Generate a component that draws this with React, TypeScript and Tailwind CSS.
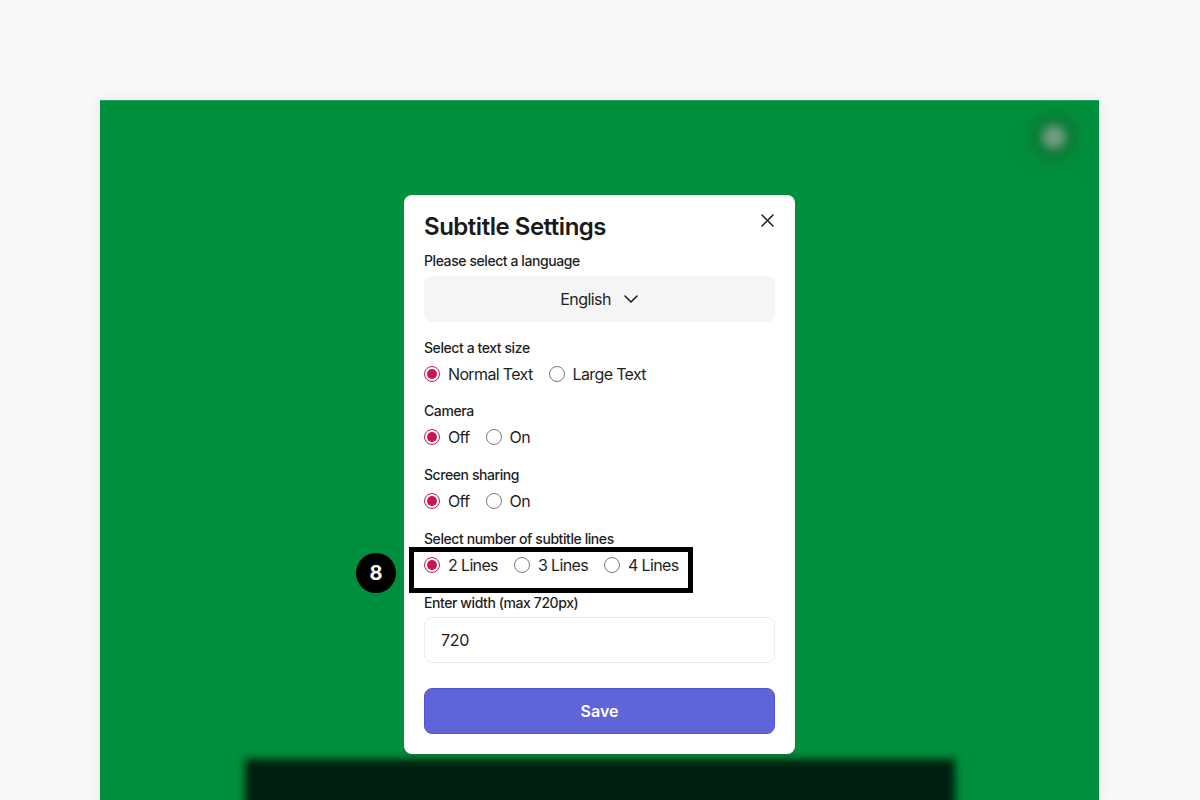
import React, { useState } from 'react'

const font = { fontFamily: 'Inter, "Noto Sans", sans-serif' }

type RadioProps = { label: string; checked: boolean; onClick: () => void }

const Radio: React.FC<RadioProps> = ({ label, checked, onClick }) => {
  return (
    <button type="button" onClick={onClick} className="flex items-center gap-2 h-6">
      {checked ? (
        <span className="w-4 h-4 rounded-full border-[1.5px] border-[#c8194f] flex items-center justify-center">
          <span className="w-[10px] h-[10px] rounded-full bg-[#c8194f]" />
        </span>
      ) : (
        <span className="w-4 h-4 rounded-full border border-[#7a7a7a] bg-white" />
      )}
      <span className="text-base tracking-[-0.04em] text-[#1f1f1f]">{label}</span>
    </button>
  )
}

const RadioGroup: React.FC<{ label: string; options: string[]; className?: string }> = ({ label, options, className }) => {
  const [value, setValue] = useState(options[0])
  return (
    <div className={`flex flex-col gap-1 ${className ?? ''}`}>
      <div className="text-sm font-medium leading-5 tracking-[-0.03em] text-[#1f1f1f]">{label}</div>
      <div className="flex items-center gap-4">
        {options.map((o) => (
          <Radio key={o} label={o} checked={value === o} onClick={() => setValue(o)} />
        ))}
      </div>
    </div>
  )
}

export default function App() {
  const [width, setWidth] = useState('720')

  return (
    <div className="w-[1200px] h-[800px] bg-[#f8f8f8] overflow-hidden pt-[100px] pl-[100px]" style={font}>
      <div className="relative w-[999px] h-[700px] bg-[#008f3c] border-t border-[#2aa35c] shadow-[0_0_12px_rgba(0,0,0,0.08)] overflow-hidden">
        {/* blurred control in the corner */}
        <div className="absolute left-[930px] top-[12px] w-12 h-12 rounded-full bg-[#0a7a36] blur-[6px]" />
        <div className="absolute left-[942px] top-[24px] w-6 h-6 rounded-full bg-[#6f9c80] blur-[5px]" />
        {/* blurred subtitle bar */}
        <div className="absolute left-[145px] top-[658px] w-[710px] h-[80px] bg-[#001f0e] blur-[4px]" />

        {/* dialog */}
        <div className="absolute left-[304px] top-[94px] w-[391px] bg-white rounded-lg px-5 pt-4 pb-5">
          <div className="relative flex items-center h-8">
            <h2 className="text-2xl font-semibold tracking-[-0.02em] text-[#1a1a1a]">Subtitle Settings</h2>
            <button type="button" className="absolute right-0 top-[1px] w-4 h-4 flex items-center justify-center text-[#1a1a1a]">
              <svg width="13" height="13" viewBox="0 0 13 13" fill="none" stroke="currentColor" strokeWidth="1.5" strokeLinecap="round">
                <path d="M1 1 L12 12 M12 1 L1 12" />
              </svg>
            </button>
          </div>

          <div className="flex flex-col gap-[5px] mt-[8px]">
            <div className="text-sm font-medium leading-5 tracking-[-0.03em] text-[#1f1f1f]">Please select a language</div>
            <button type="button" className="h-[46px] w-full rounded-lg bg-[#f5f5f5] flex items-center justify-center gap-3 text-base tracking-[-0.035em] text-[#1f1f1f]">
              <span>English</span>
              <svg width="16" height="16" viewBox="0 0 16 16" fill="none" stroke="currentColor" strokeWidth="1.6" strokeLinecap="round" strokeLinejoin="round">
                <path d="M2 5 L8 11 L14 5" />
              </svg>
            </button>
          </div>

          <RadioGroup className="mt-4" label="Select a text size" options={['Normal Text', 'Large Text']} />
          <RadioGroup className="mt-[15px]" label="Camera" options={['Off', 'On']} />
          <RadioGroup className="mt-4" label="Screen sharing" options={['Off', 'On']} />
          <RadioGroup className="mt-4" label="Select number of subtitle lines" options={['2 Lines', '3 Lines', '4 Lines']} />

          <div className="flex flex-col gap-1 mt-4">
            <div className="text-sm font-medium leading-5 tracking-[-0.03em] text-[#1f1f1f]">Enter width (max 720px)</div>
            <input
              value={width}
              onChange={(e) => setWidth(e.target.value)}
              className="h-[46px] w-full rounded-lg border border-[#ececec] px-4 text-base tracking-[-0.02em] text-[#1a1a1a] outline-none"
            />
          </div>

          <button type="button" className="mt-[25px] h-[46px] w-full rounded-lg bg-[#5f64d8] border border-[#5257d0] text-white text-base font-semibold">
            Save
          </button>
        </div>

        {/* annotation */}
        <div className="absolute left-[309px] top-[446px] w-[284px] h-[46px] border-[5px] border-black" />
        <div className="absolute left-[256px] top-[452px] w-10 h-10 rounded-full bg-black text-white flex items-center justify-center text-xl font-bold">
          8
        </div>
      </div>
    </div>
  )
}
